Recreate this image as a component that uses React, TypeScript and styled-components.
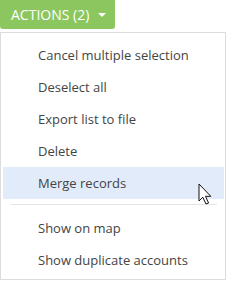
import React from "react";
import styled, { createGlobalStyle } from "styled-components";

const GlobalStyle = createGlobalStyle`
  body {
    margin: 0;
    background: #ffffff;
    font-family: "Open Sans", "Liberation Sans", sans-serif;
  }
`;

const StyledPage = styled.div`
  display: flex;
  flex-direction: column;
  align-items: flex-start;
  gap: 3px;
  width: 227px;
`;

const StyledActionsButton = styled.button`
  display: flex;
  align-items: center;
  gap: 9px;
  height: 29px;
  width: 115px;
  padding: 0 0 0 11px;
  border: none;
  border-radius: 0 0 3px 3px;
  background-color: #8bc65f;
  color: #ffffff;
  font-family: "Open Sans", "Liberation Sans", sans-serif;
  font-size: 14px;
  cursor: pointer;
`;

const StyledCaret = styled.span`
  width: 0;
  height: 0;
  border-left: 4px solid transparent;
  border-right: 4px solid transparent;
  border-top: 4px solid #ffffff;
`;

const StyledMenu = styled.ul`
  position: relative;
  box-sizing: border-box;
  width: 226px;
  margin: 0;
  padding: 6px 0 3px;
  list-style: none;
  border: 1px solid #dcdcdc;
  background: #ffffff;
`;

const StyledItem = styled.li<{ $active?: boolean }>`
  display: flex;
  align-items: center;
  height: 32px;
  margin: 0 1px 0 2px;
  padding-left: 35px;
  font-size: 13px;
  color: #444444;
  background-color: ${({ $active }) => ($active ? "#e2ebfa" : "transparent")};
`;

const StyledSeparator = styled.li`
  height: 1px;
  margin: 5px 8px 7px 10px;
  background-color: #e4e4e4;
`;

const StyledCursor = styled.svg`
  position: absolute;
  left: 197px;
  top: 150px;
`;

const topItems = [
  "Cancel multiple selection",
  "Deselect all",
  "Export list to file",
  "Delete",
  "Merge records",
];

const bottomItems = ["Show on map", "Show duplicate accounts"];

function App() {
  return (
    <>
      <GlobalStyle />
      <StyledPage>
        <StyledActionsButton>
          ACTIONS (2)
          <StyledCaret />
        </StyledActionsButton>
        <StyledMenu>
          {topItems.map((label) => (
            <StyledItem key={label} $active={label === "Merge records"}>
              {label}
            </StyledItem>
          ))}
          <StyledSeparator />
          {bottomItems.map((label) => (
            <StyledItem key={label}>{label}</StyledItem>
          ))}
          <StyledCursor width="15" height="23" viewBox="0 0 15 23">
            <path
              d="M1 1 L1 18 L4.8 14.2 L8 21 L10.6 20 L7.5 13.3 L12.8 13.3 Z"
              fill="#ffffff"
              stroke="#111111"
              strokeWidth="1"
              strokeLinejoin="round"
            />
          </StyledCursor>
        </StyledMenu>
      </StyledPage>
    </>
  );
}

export default App;
